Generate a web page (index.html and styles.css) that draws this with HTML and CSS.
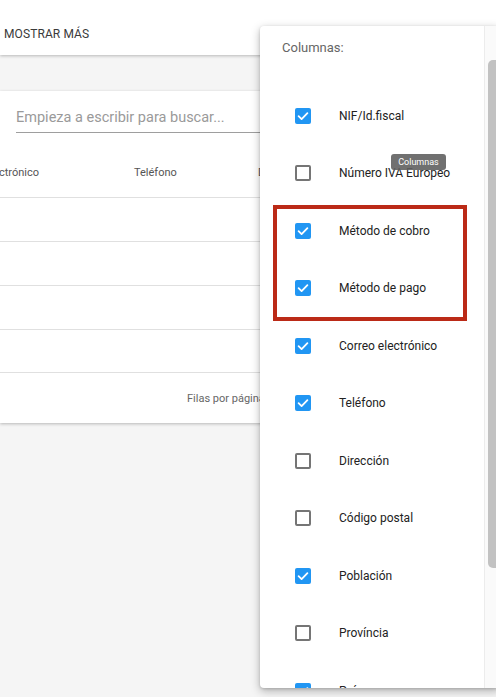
FILE: index.html
```html
<!DOCTYPE html>
<html lang="es">
<head>
<meta charset="utf-8">
<title>Columnas</title>
<link rel="stylesheet" href="styles.css">
</head>
<body>
<div class="avatar"></div>
<header class="topbar"><span class="more">MOSTRAR MÁS</span></header>
<section class="card">
  <div class="search"><span class="placeholder">Empieza a escribir para buscar...</span></div>
  <div class="thead">
    <span class="th c1">Correo electrónico</span>
    <span class="th c2">Teléfono</span>
    <span class="th c3">Dirección</span>
  </div>
  <div class="trow"></div>
  <div class="trow"></div>
  <div class="trow"></div>
  <div class="trow"></div>
  <div class="tfoot"><span>Filas por página:</span></div>
</section>

<div class="panel">
  <div class="panel-body">
    <div class="panel-title">Columnas:</div>
    <ul class="cols">
      <li><span class="cb on"><svg viewBox="0 0 16 16"><path d="M3.6 8.2l3 2.9 5.8-6" /></svg></span><span class="lbl">NIF/Id.fiscal</span></li>
      <li><span class="cb"></span><span class="lbl">Número IVA Europeo</span></li>
      <li><span class="cb on"><svg viewBox="0 0 16 16"><path d="M3.6 8.2l3 2.9 5.8-6" /></svg></span><span class="lbl">Método de cobro</span></li>
      <li><span class="cb on"><svg viewBox="0 0 16 16"><path d="M3.6 8.2l3 2.9 5.8-6" /></svg></span><span class="lbl">Método de pago</span></li>
      <li><span class="cb on"><svg viewBox="0 0 16 16"><path d="M3.6 8.2l3 2.9 5.8-6" /></svg></span><span class="lbl">Correo electrónico</span></li>
      <li><span class="cb on"><svg viewBox="0 0 16 16"><path d="M3.6 8.2l3 2.9 5.8-6" /></svg></span><span class="lbl">Teléfono</span></li>
      <li><span class="cb"></span><span class="lbl">Dirección</span></li>
      <li><span class="cb"></span><span class="lbl">Código postal</span></li>
      <li><span class="cb on"><svg viewBox="0 0 16 16"><path d="M3.6 8.2l3 2.9 5.8-6" /></svg></span><span class="lbl">Población</span></li>
      <li><span class="cb"></span><span class="lbl">Província</span></li>
      <li><span class="cb on"><svg viewBox="0 0 16 16"><path d="M3.6 8.2l3 2.9 5.8-6" /></svg></span><span class="lbl">País</span></li>
    </ul>
    <div class="highlight"></div>
  </div>
  <div class="scrollbar"><div class="thumb"></div></div>
</div>
<div class="tooltip">Columnas</div>
</body>
</html>
```
FILE: styles.css
```css
html, body {
  margin: 0;
  padding: 0;
}
body {
  width: 496px;
  height: 697px;
  overflow: hidden;
  background: #f5f5f5;
  font-family: Roboto, "Noto Sans", Arial, sans-serif;
  position: relative;
}
.avatar {
  position: absolute;
  left: 453px;
  top: -22px;
  width: 24px;
  height: 24px;
  border-radius: 50%;
  background: #b0b0b0;
}
.topbar {
  height: 55px;
  background: #fff;
  box-shadow: 0 1px 3px rgba(0,0,0,0.25);
  display: flex;
  align-items: flex-end;
  padding: 0 0 0 4px;
  box-sizing: border-box;
  position: relative;
  z-index: 1;
}
.more {
  font-size: 12px;
  color: #3a3a3a;
  line-height: 14px;
  margin-bottom: 14px;
  letter-spacing: 0.1px;
}
.card {
  margin-top: 36px;
  height: 332px;
  background: #fff;
  box-shadow: 0 1px 3px rgba(0,0,0,0.25);
  box-sizing: border-box;
  display: flex;
  flex-direction: column;
}
.search {
  height: 42px;
  margin-left: 16px;
  border-bottom: 1px solid #9e9e9e;
  display: flex;
  align-items: flex-end;
  box-sizing: border-box;
}
.placeholder {
  font-size: 14.5px;
  color: #9a9a9a;
  line-height: 18px;
  margin-bottom: 5px;
}
.thead {
  height: 65px;
  border-bottom: 1px solid #e0e0e0;
  position: relative;
  box-sizing: border-box;
  display: flex;
  align-items: center;
  padding-top: 15px;
}
.th {
  font-size: 11px;
  color: #555;
  white-space: nowrap;
}
.c1 { margin-left: -51px; width: 185px; }
.c2 { width: 124px; }
.trow {
  height: 44px;
  border-bottom: 1px solid #e0e0e0;
  box-sizing: border-box;
}
.trow:nth-child(6) { height: 43px; }
.tfoot {
  flex: 1;
  display: flex;
  align-items: center;
  padding-left: 187px;
  font-size: 11px;
  color: #666;
  white-space: nowrap;
}
.panel {
  position: absolute;
  left: 260px;
  top: 26px;
  width: 240px;
  height: 662px;
  background: #fff;
  border-radius: 4px;
  box-shadow: 0 3px 10px rgba(0,0,0,0.28), 0 1px 3px rgba(0,0,0,0.15);
  display: flex;
  overflow: hidden;
  z-index: 2;
}
.panel-body {
  width: 225px;
  position: relative;
  overflow: hidden;
}
.panel-title {
  height: 61px;
  padding-left: 22px;
  padding-top: 14px;
  box-sizing: border-box;
  font-size: 13px;
  color: #666;
  line-height: 16px;
}
.cols {
  list-style: none;
  margin: 0;
  padding: 0;
}
.cols li {
  height: 57.5px;
  display: flex;
  align-items: center;
  padding-left: 35px;
}
.cb {
  width: 16px;
  height: 16px;
  box-sizing: border-box;
  border: 2px solid #757575;
  border-radius: 2px;
  flex: none;
  display: flex;
}
.cb.on {
  border: none;
  background: #2196f3;
}
.cb svg {
  width: 16px;
  height: 16px;
  fill: none;
  stroke: #fff;
  stroke-width: 1.8;
  stroke-linecap: round;
  stroke-linejoin: round;
}
.lbl {
  margin-left: 28px;
  font-size: 12px;
  color: #222;
  white-space: nowrap;
}
.highlight {
  position: absolute;
  left: 13px;
  top: 179px;
  width: 194px;
  height: 116px;
  box-sizing: border-box;
  border: 4px solid #bb2a17;
}
.scrollbar {
  width: 15px;
  background: #fafafa;
  border-left: 1px solid #ececec;
  position: relative;
}
.thumb {
  position: absolute;
  left: 3px;
  top: 34px;
  width: 14px;
  height: 508px;
  border-radius: 5px;
  background: #c2c2c2;
}
.tooltip {
  position: absolute;
  left: 391px;
  top: 154px;
  width: 55px;
  height: 16px;
  border-radius: 3px;
  background: rgba(97,97,97,0.9);
  color: #fff;
  font-size: 9px;
  line-height: 16px;
  text-align: center;
  z-index: 3;
}
```
